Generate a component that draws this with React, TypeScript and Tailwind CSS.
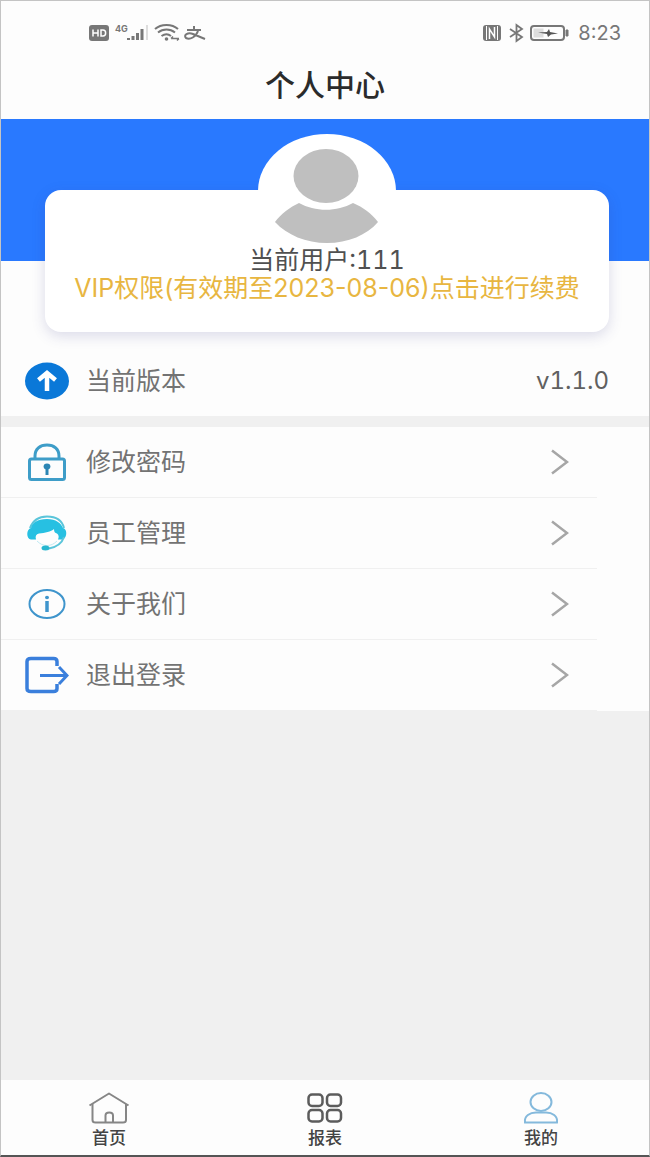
import type { ReactNode } from 'react'

type MenuItem = { label: string; icon: ReactNode }
type Tab = { label: string; icon: ReactNode; active?: boolean }

const MENU: MenuItem[] = [
  { label: '修改密码', icon: <LockIcon /> },
  { label: '员工管理', icon: <StaffIcon /> },
  { label: '关于我们', icon: <InfoIcon /> },
  { label: '退出登录', icon: <LogoutIcon /> },
]

const TABS: Tab[] = [
  { label: '首页', icon: <HomeIcon /> },
  { label: '报表', icon: <GridIcon /> },
  { label: '我的', icon: <UserIcon />, active: true },
]

function LockIcon() {
  return (
    <svg width="44" height="40" viewBox="0 0 44 40" fill="none" stroke="#3e9dc8" strokeWidth="3" aria-hidden="true">
      <path d="M10 17V14C10 7 15 3 22 3S34 7 34 14V17" />
      <rect x="4.5" y="17" width="35" height="20.5" rx="2" />
      <ellipse cx="22" cy="24.5" rx="3.4" ry="3" fill="#2c86b4" stroke="none" />
      <path d="M22 25V33" stroke="#2c86b4" />
    </svg>
  )
}

function StaffIcon() {
  return (
    <svg width="44" height="40" viewBox="0 0 44 40" fill="none" aria-hidden="true">
      <path d="M5 15C8 7 14 3.500 22 3.500S37 7 39 15" stroke="#5bc5da" strokeWidth="2" />
      <path d="M22 6C12 6 7 10 6 15C1 16 1 26 6 26.5H11C10 23 11 21 14 20.500C20 20 26 18.500 29 16C29 19 30 20 32 20.500C34 22 34 24 33 26.5H37C42 26 43 16 38 15C36 10 31 6 22 6Z" fill="#27c0e2" />
      <path d="M39 24C37 30 32 34 24 35.500" stroke="#5bc5da" strokeWidth="2" />
      <path d="M12 28C15 31 18 32.500 22 32.500S29 31 32 28" stroke="#bfeaf3" strokeWidth="1" />
      <ellipse cx="20.500" cy="35" rx="4" ry="2.500" fill="#27b6cf" />
    </svg>
  )
}

function InfoIcon() {
  return (
    <svg width="44" height="40" viewBox="0 0 44 40" fill="none" stroke="#3f95cc" aria-hidden="true">
      <ellipse cx="22" cy="20" rx="17.5" ry="14" strokeWidth="2" />
      <path d="M22 17V28" strokeWidth="3.5" />
      <ellipse cx="22" cy="13.5" rx="2" ry="1.7" fill="#3f95cc" stroke="none" />
    </svg>
  )
}

function LogoutIcon() {
  return (
    <svg width="44" height="40" viewBox="0 0 44 40" fill="none" stroke="#3a7fdc" strokeWidth="3.5" aria-hidden="true">
      <path d="M32 11V6.5C32 4.5 31 3.5 28.5 3.5H6C3.5 3.5 2 4.5 2 6.5V33.5C2 35.5 3.5 36.5 6 36.5H28.5C31 36.5 32 35.5 32 33.5V29" />
      <path d="M15 20.5H41M34 12L42 20.5L34 29" strokeWidth="3" />
    </svg>
  )
}

function VersionIcon() {
  return (
    <svg width="44" height="38" viewBox="0 0 44 38" fill="none" aria-hidden="true">
      <ellipse cx="22" cy="19" rx="22" ry="18.5" fill="#0a78d8" />
      <path d="M22 29V12M13.5 18L22 11L30.5 18" stroke="#fff" strokeWidth="4.5" />
    </svg>
  )
}

function ChevronIcon() {
  return (
    <svg width="18" height="26" viewBox="0 0 18 26" fill="none" stroke="#a6a6a6" strokeWidth="2.5" aria-hidden="true">
      <path d="M1 1.5L16 13L1 24.5" />
    </svg>
  )
}

function HomeIcon() {
  return (
    <svg width="42" height="32" viewBox="0 0 42 32" fill="none" stroke="#868686" strokeWidth="2" strokeLinejoin="round" aria-hidden="true">
      <path d="M1.5 13.5L21 1.5L40.5 13.5" />
      <path d="M4.5 12V28C4.5 29.5 5.5 30.5 7.5 30.5H35C37 30.5 38 29.5 38 28V12" />
      <path d="M17.5 30V23.5C17.5 19.5 25 19.5 25 23.5V30" />
    </svg>
  )
}

function GridIcon() {
  return (
    <svg width="36" height="30" viewBox="0 0 36 30" fill="none" stroke="#5c5c5c" strokeWidth="2.5" aria-hidden="true">
      <rect x="1.5" y="1.5" width="14" height="11.5" rx="3.5" />
      <rect x="20" y="1.5" width="14" height="11.5" rx="3.5" />
      <rect x="1.5" y="17" width="14" height="11.5" rx="3.5" />
      <rect x="20" y="17" width="14" height="11.5" rx="3.5" />
    </svg>
  )
}

function UserIcon() {
  return (
    <svg width="36" height="32" viewBox="0 0 36 32" fill="none" stroke="#84b9dc" strokeWidth="2" aria-hidden="true">
      <ellipse cx="18" cy="10" rx="10.5" ry="9" />
      <path d="M2 30.5C1 24 7 20.5 13 20.5H23C29 20.5 35 24 34 30.5Z" />
    </svg>
  )
}

function Avatar() {
  return (
    <svg width="138" height="114" viewBox="0 0 138 114" aria-hidden="true">
      <ellipse cx="69" cy="57" rx="69" ry="57" fill="#fff" />
      <ellipse cx="68" cy="42" rx="32.5" ry="27" fill="#bfbfbf" />
      <path d="M41 69C57 78 79 78 95 69C105 73 114 80 120 88C109 101 90 109 69 109S29 101 17 88C23 80 32 73 41 69Z" fill="#bfbfbf" />
    </svg>
  )
}

function StatusBar() {
  return (
    <div className="flex h-16 items-center justify-between pl-22 pr-7 text-[#777]">
      <svg width="118" height="20" viewBox="0 0 118 20" fill="none" stroke="#777" aria-hidden="true">
        <rect x="0" y="2" width="20" height="16" rx="3" fill="#777" stroke="none" />
        <path d="M4 6.5V13.5M9 6.5V13.5M4 10H9M12 7V13H14C17.5 13 17.5 7 14 7Z" stroke="#fff" strokeWidth="1.5" />
        <text x="26" y="9" fontSize="9" fontWeight="700" fill="#777" stroke="none">4G</text>
        <path d="M39.5 17V15M44 17V13M48.5 17V10M53 17V6" strokeWidth="3" />
        <path d="M58 17V2" stroke="#ddd" strokeWidth="2" />
        <path d="M66 6C72 .5 83 .5 89 6M69 9.5C74 5.5 81 5.5 86 9.5M72.500 13C76 10.5 79 10.5 82 13" strokeWidth="2" />
        <circle cx="77.5" cy="16" r="1.8" fill="#777" stroke="none" />
        <path d="M82 15.5H90M84 13.5L82 15.5M88 17.5L90 15.5" strokeWidth="1.5" />
        <path d="M98 7H112M105 3V7M109 8C107 14 101 17 97 15C94 12 99 9 104 11L116 16" strokeWidth="2" />
      </svg>
      <div className="flex items-center gap-2">
        <svg width="88" height="20" viewBox="0 0 88 20" fill="none" stroke="#777" aria-hidden="true">
          <rect x="1" y="2" width="18" height="16" rx="3" fill="#777" stroke="none" />
          <path d="M4.500 3V17M15.500 3V17" stroke="#fff" strokeWidth="1" />
          <path d="M7.500 16V6L12.500 14V4" stroke="#fff" strokeWidth="1.5" />
          <path d="M28 6L40 14L34.5 18V2L40 6L28 14" strokeWidth="1.8" />
          <rect x="49" y="3" width="33" height="14" rx="3" strokeWidth="2" />
          <rect x="51.5" y="5.5" width="10" height="9" fill="#ddd" stroke="none" />
          <path d="M84 7H86V13H84Z" fill="#777" />
          <path d="M56 9.5L65 9L67 6L68 9L76 10.5L69 11.5L66 14L65 11Z" fill="#555" stroke="none" />
        </svg>
        <span className="text-[20px] leading-6">8:23</span>
      </div>
    </div>
  )
}

export default function App() {
  return (
    <div className="flex min-h-screen flex-col border border-b-2 border-[#c4c4c4] border-b-[#555] bg-[#f0f0f0] font-['Inter','Noto_Sans_CJK_SC',sans-serif]">
      <header className="bg-[#fdfdfd]">
        <StatusBar />
        <h1 className="h-[54px] text-center text-[30px] font-medium leading-10 text-[#2b2b2b]">个人中心</h1>
      </header>

      <main className="flex-1">
        <section className="bg-[#fdfdfd]">
          <div className="h-[142px] bg-[#2979ff]" />
          <div className="-mt-[71px] ml-11 mr-10 flex h-[142px] flex-col items-center rounded-2xl bg-white shadow-[0_4px_14px_rgba(60,60,140,0.18)]">
            <div className="-mt-14 -mb-0.5">
              <Avatar />
            </div>
            <p className="text-[25px] leading-7 tabular-nums text-[#505050]">当前用户:111</p>
            <a href="#renew" className="whitespace-nowrap text-[25px] leading-7 text-[#e8b641]">
              VIP权限(有效期至2023-08-06)点击进行续费
            </a>
          </div>
          <div className="flex h-[84px] items-center pl-6 pr-10 pt-3.5">
            <VersionIcon />
            <span className="ml-[17px] text-[25px] leading-8 text-[#737373]">当前版本</span>
            <span className="ml-auto text-[24px] leading-8 tabular-nums text-[#606060]">v1.1.0</span>
          </div>
        </section>

        <ul className="mt-[11px] bg-[#fdfdfd]">
          {MENU.map(item => (
            <li key={item.label}>
              <button
                type="button"
                className="flex h-[71px] w-[92%] items-center border-b border-[#f0f0f0] pl-6 pr-7 text-left"
              >
                {item.icon}
                <span className="ml-[17px] mr-auto text-[25px] leading-8 text-[#737373]">{item.label}</span>
                <ChevronIcon />
              </button>
            </li>
          ))}
        </ul>
      </main>

      <nav className="grid h-[75px] grid-cols-3 bg-[#fdfdfd]">
        {TABS.map(tab => (
          <button
            key={tab.label}
            type="button"
            aria-current={tab.active ? 'page' : undefined}
            className="flex flex-col items-center pt-2.5"
          >
            <span className="flex h-9 items-center">{tab.icon}</span>
            <span className="text-[17px] font-medium leading-6 text-[#444]">{tab.label}</span>
          </button>
        ))}
      </nav>
    </div>
  )
}
